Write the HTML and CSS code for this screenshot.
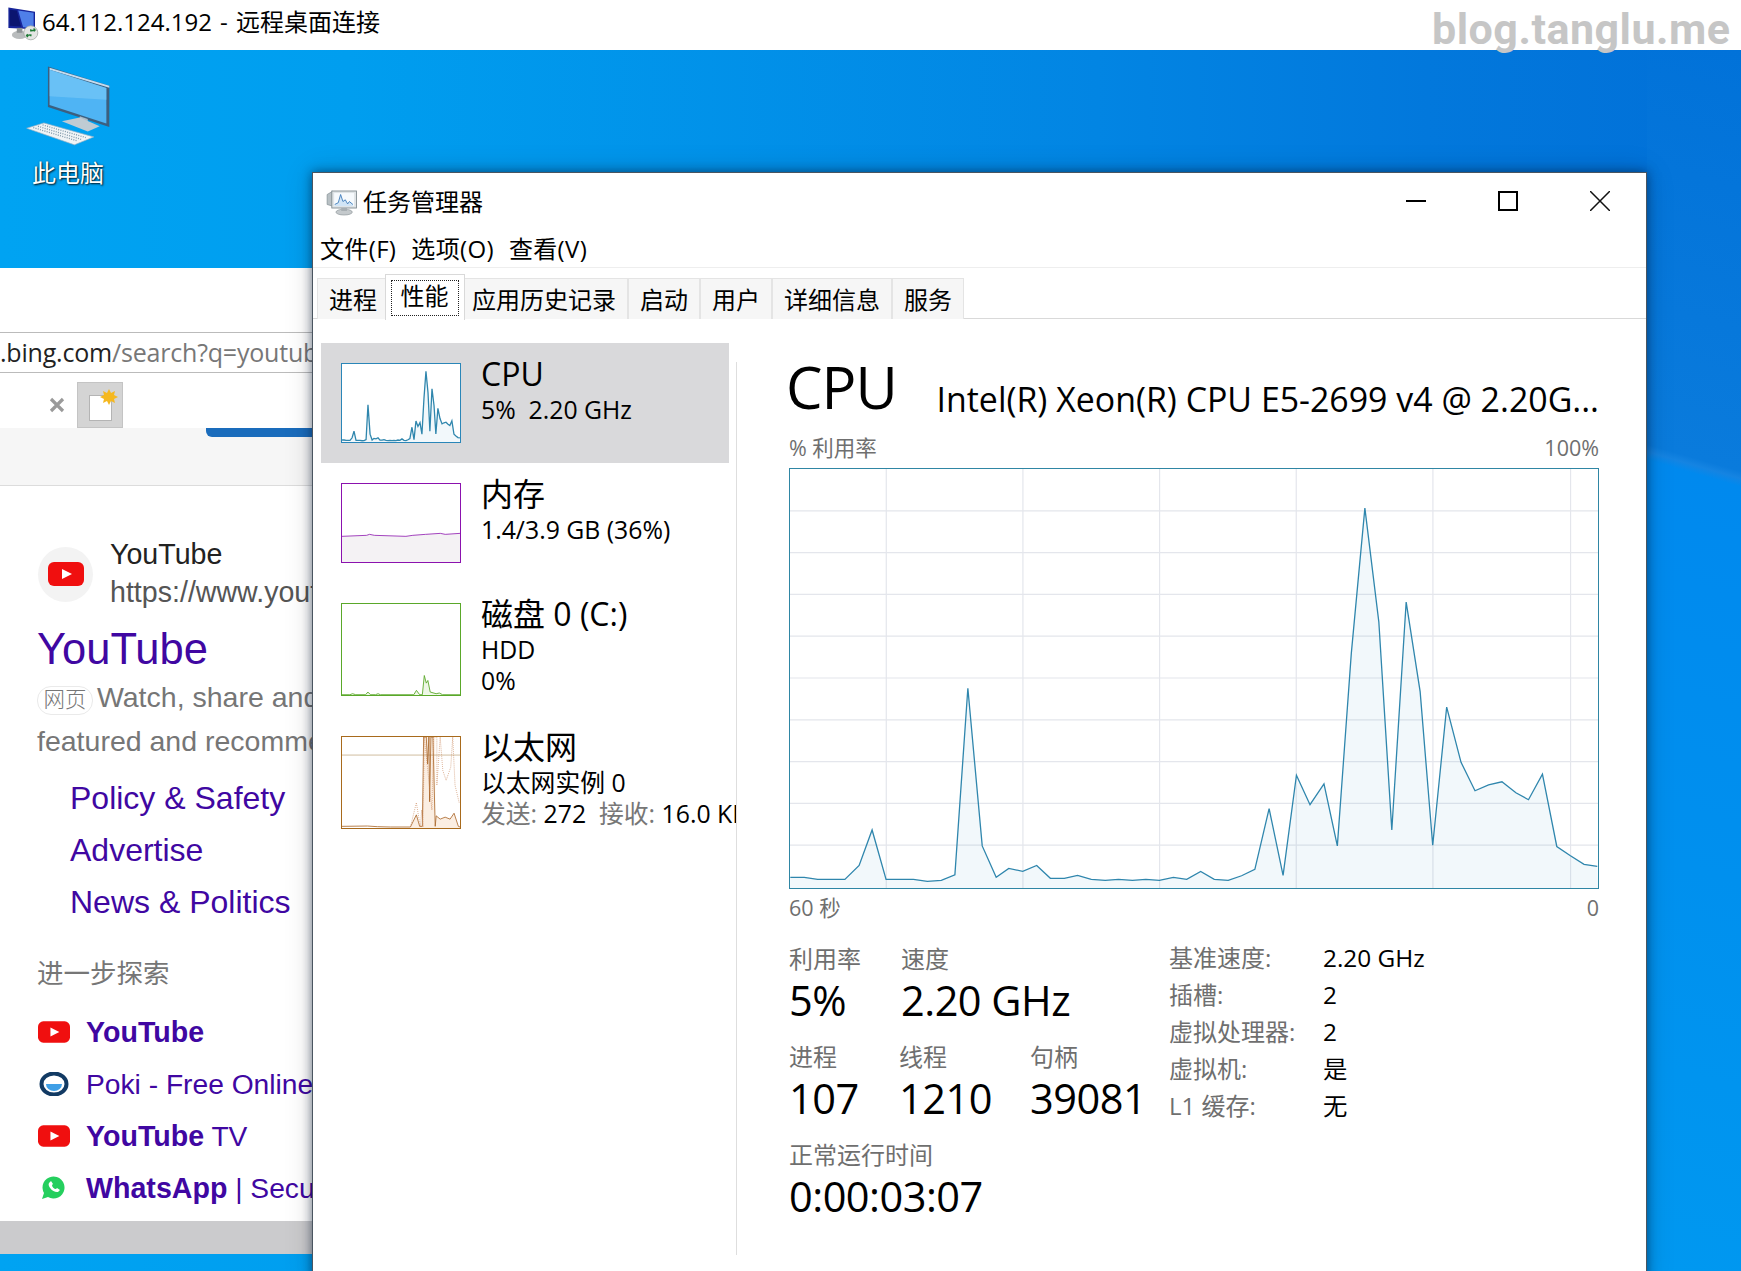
FILE: index.html
```html
<!DOCTYPE html>
<html lang="zh-CN">
<head>
<meta charset="utf-8">
<title>64.112.124.192 - 远程桌面连接</title>
<link rel="stylesheet" href="styles.css">
</head>
<body>
<svg class="defs" aria-hidden="true">
  <symbol id="cpu-data" viewBox="0 0 810 421" preserveAspectRatio="none">
    <polygon class="cpu-fill" points="0,421 0.3,410.3 14.3,410.3 27.7,412.3 55,412.3 69.3,398.3 82.3,362.7 96.3,412.3 123.7,412.3 137.7,414.3 151.7,413.3 165.3,407.7 178.3,220.3 192.7,378.7 206.7,410.3 219.3,401.3 233.3,404.3 247.3,398.3 261,411.3 275,411.3 288.3,408.3 302,412.3 316,413.3 329.3,412.3 343.3,413.3 356.7,412.3 370.3,413.3 384.3,410.3 397.7,412.3 411.7,404.3 425.3,412.3 439.3,413.3 452.7,408.7 466,402.3 480.3,341.3 494.3,408.3 507.7,307.7 521.3,337.3 535.3,316.3 548.7,378.7 562.7,185.3 576.3,39.3 590.3,153.7 603.3,362.7 617.7,133.7 631.7,223.7 644.3,378 658.3,239.3 672.7,294.7 686.7,323.3 700.3,317.3 713.7,314.3 727.7,325.3 740.3,332.3 754.3,306.7 768.7,379.3 782,388.3 796,397.3 809.3,399.3 810,421"/>
    <polyline class="cpu-line" points="0.3,410.3 14.3,410.3 27.7,412.3 55,412.3 69.3,398.3 82.3,362.7 96.3,412.3 123.7,412.3 137.7,414.3 151.7,413.3 165.3,407.7 178.3,220.3 192.7,378.7 206.7,410.3 219.3,401.3 233.3,404.3 247.3,398.3 261,411.3 275,411.3 288.3,408.3 302,412.3 316,413.3 329.3,412.3 343.3,413.3 356.7,412.3 370.3,413.3 384.3,410.3 397.7,412.3 411.7,404.3 425.3,412.3 439.3,413.3 452.7,408.7 466,402.3 480.3,341.3 494.3,408.3 507.7,307.7 521.3,337.3 535.3,316.3 548.7,378.7 562.7,185.3 576.3,39.3 590.3,153.7 603.3,362.7 617.7,133.7 631.7,223.7 644.3,378 658.3,239.3 672.7,294.7 686.7,323.3 700.3,317.3 713.7,314.3 727.7,325.3 740.3,332.3 754.3,306.7 768.7,379.3 782,388.3 796,397.3 809.3,399.3"/>
  </symbol>
  <symbol id="yt" viewBox="0 0 36 24">
    <rect width="36" height="24" rx="6" fill="#f00f0f"/>
    <polygon points="14,7 24,12 14,17" fill="#fff"/>
  </symbol>
</svg>

<header class="rdp-bar">
  <svg class="rdp-icon" viewBox="0 0 120 120">
    <polygon points="24,16 100,28 100,78 24,74" fill="#16249a"/>
    <polygon points="52,24 96,31 96,74 66,72" fill="#4f7fe8"/>
    <polygon points="28,22 48,24 60,70 28,68" fill="#0b1570"/>
    <ellipse cx="56" cy="94" rx="22" ry="12" fill="#b9bcbd"/>
    <rect x="48" y="74" width="16" height="14" fill="#8f9496"/>
    <circle cx="88" cy="88" r="20" fill="#e4e6e4" stroke="#9aa09c" stroke-width="2"/>
    <path d="M76 96l10-2M80 100l-4-4 3-4M100 80l-10 2M96 76l4 4-3 4M88 78v6M88 92v6" fill="none" stroke="#1d7a35" stroke-width="4"/>
  </svg>
  <span class="rdp-title">64.112.124.192 - 远程桌面连接</span>
  <span class="watermark">blog.tanglu.me</span>
</header>

<main class="desktop">
  <div class="desk-icon">
    <svg class="pc-icon" viewBox="70 190 265 255">
      <polygon points="142,200 327,258 327,382 142,322" fill="#3c5f7f"/>
      <polygon points="147,204 327,258 327,264 147,210" fill="#c4dcef"/>
      <polygon points="147,210 318,265 318,372 147,316" fill="#4fb4f4"/>
      <polygon points="147,210 318,265 318,300 147,290" fill="#7ccaf7" opacity=".6"/>
      <polygon points="238,350 262,358 262,378 238,370" fill="#a9bac6"/>
      <polygon points="184,365 238,354 298,380 262,396" fill="#bfcbd3"/>
      <polygon points="78,386 130,370 280,412 222,436" fill="#f0f4f6" stroke="#9db2c2" stroke-width="2"/>
      <path d="M98 384l132 40M112 380l132 40M126 376l130 38" stroke="#7f97a9" stroke-width="4" stroke-dasharray="3 4"/>
    </svg>
    <span class="desk-label">此电脑</span>
  </div>

  <section class="browser">
    <div class="br-top"></div>
    <div class="br-url"><b>.bing.com</b>/search?q=youtube</div>
    <div class="br-tabs">
      <div class="br-tab-rest">
        <svg class="br-x" viewBox="0 0 16 16"><path d="M2 2l12 12M14 2L2 14" stroke="#9a9a9a" stroke-width="3.2"/></svg>
      </div>
      <div class="br-new">
        <svg class="br-doc" viewBox="0 0 30 32">
          <rect x="1.5" y="6.5" width="22" height="25" fill="#fff" stroke="#b4b4b4"/>
          <path d="M21 0l2 4 4-2-1 4 4 2-4 2 1 4-4-2-2 4-2-4-4 2 1-4-4-2 4-2-1-4 4 2z" fill="#f5b81f"/>
        </svg>
      </div>
    </div>
    <div class="br-tool"><div class="br-progress"></div></div>
    <div class="results">
      <div class="site">
        <div class="favicon"><svg class="fav-yt"><use href="#yt"/></svg></div>
        <div class="site-text">
          <div class="site-name">YouTube</div>
          <div class="site-url">https://www.youtube.com</div>
        </div>
      </div>
      <a class="res-title">YouTube</a>
      <p class="res-desc"><span class="res-tag">网页</span> Watch, share and discover videos</p>
      <p class="res-desc">featured and recommended music</p>
      <a class="sublink first">Policy &amp; Safety</a>
      <a class="sublink">Advertise</a>
      <a class="sublink">News &amp; Politics</a>
      <h3 class="more">进一步探索</h3>
      <div class="rel first">
        <svg class="rel-icon"><use href="#yt"/></svg>
        <a><b>YouTube</b></a>
      </div>
      <div class="rel">
        <svg class="rel-icon" viewBox="0 0 32 24">
          <ellipse cx="16" cy="12" rx="12.5" ry="10.5" fill="#fff" stroke="#123a63" stroke-width="4"/>
          <path d="M8 12h16a8 7 0 0 1-16 0z" fill="#3f9fe6"/>
        </svg>
        <a>Poki - Free Online Games</a>
      </div>
      <div class="rel">
        <svg class="rel-icon"><use href="#yt"/></svg>
        <a><b>YouTube</b> TV</a>
      </div>
      <div class="rel">
        <svg class="rel-icon" viewBox="0 0 32 24">
          <path d="M4 23l2-6a11 11 0 1 1 4 4z" fill="#25cf5e"/>
          <path d="M11 7c-2 3 4 10 9 9l2-2-3-2-1 1c-2 0-4-2-4-4l1-1-2-3z" fill="#fff"/>
        </svg>
        <a><b>WhatsApp</b> | Secure messaging</a>
      </div>
    </div>
    <div class="br-status"></div>
  </section>

  <section class="tm">
    <div class="tm-title">
      <svg class="tm-icon" viewBox="0 0 150 135">
        <polygon points="14,42 34,30 34,82 14,76" fill="#b8c0c4" stroke="#78848a" stroke-width="2"/>
        <rect x="30" y="30" width="84" height="58" fill="#dfe4e7" stroke="#7f8b90" stroke-width="3"/>
        <rect x="38" y="37" width="68" height="44" fill="#f6fafd"/>
        <path d="M40 76l12-6 8-28 8 24 8-6 8 14 6-8 12 10V81H40z" fill="#c8e0f4" opacity=".8"/>
        <path d="M40 76l12-6 8-28 8 24 8-6 8 14 6-8 12 10" fill="none" stroke="#3a79b8" stroke-width="3"/>
        <ellipse cx="72" cy="102" rx="28" ry="10" fill="#c4c9cc" stroke="#888f93" stroke-width="2"/>
        <rect x="62" y="88" width="20" height="10" fill="#a7aeb2"/>
      </svg>
      <span class="tm-name">任务管理器</span>
      <div class="ctrls">
        <button class="ctrl"><svg viewBox="0 0 20 20"><path d="M0 10h20" stroke="#000" stroke-width="2"/></svg></button>
        <button class="ctrl"><svg viewBox="0 0 20 20"><rect x="1" y="1" width="18" height="18" fill="none" stroke="#000" stroke-width="2"/></svg></button>
        <button class="ctrl"><svg viewBox="0 0 20 20"><path d="M0 0l20 20M20 0L0 20" stroke="#111" stroke-width="1.5"/></svg></button>
      </div>
    </div>
    <nav class="tm-menu">
      <span>文件(F)</span><span>选项(O)</span><span>查看(V)</span>
    </nav>
    <div class="tm-tabs">
      <div class="tab">进程</div>
      <div class="tab active"><span class="focus">性能</span></div>
      <div class="tab">应用历史记录</div>
      <div class="tab">启动</div>
      <div class="tab">用户</div>
      <div class="tab">详细信息</div>
      <div class="tab">服务</div>
    </div>
    <div class="tm-body">
      <aside class="side">
        <div class="item selected">
          <div class="thumb thumb-cpu"><svg preserveAspectRatio="none" viewBox="0 0 810 421"><use href="#cpu-data" width="810" height="421"/></svg></div>
          <div class="item-text">
            <div class="item-title latin">CPU</div>
            <div class="item-sub">5%&nbsp; 2.20 GHz</div>
          </div>
        </div>
        <div class="item">
          <div class="thumb thumb-mem"><svg preserveAspectRatio="none" viewBox="0 0 120 79">
            <polygon points="0,79 0,53 25,52 28,51 33,52 65,53 72,52 85,51 100,50 105,51 120,50 120,79" fill="#f4f2f4"/>
            <polyline points="0,53 25,52 28,51 33,52 65,53 72,52 85,51 100,50 105,51 120,50" fill="none" stroke="#8b12ae" stroke-width=".8"/>
          </svg></div>
          <div class="item-text">
            <div class="item-title">内存</div>
            <div class="item-sub">1.4/3.9 GB (36%)</div>
          </div>
        </div>
        <div class="item tall">
          <div class="thumb thumb-disk"><svg preserveAspectRatio="none" viewBox="0 0 120 92">
            <polyline points="0,91.7 8,91.7 10.7,90.7 14,91.7 24,91.7 26.3,89 29,91.7 34,91.7 36.7,90.7 39,91.7 73,91.7 75.7,87.3 79,91.7 81.7,91.7 83.7,72.3 85.7,80 87.3,77.3 89.7,89 95.7,90.7 99,90 102.3,91.7 120,91.7" fill="#eef7e6" stroke="#5aa82a" stroke-width=".9"/>
          </svg></div>
          <div class="item-text">
            <div class="item-title">磁盘 0 (C:)</div>
            <div class="item-sub">HDD</div>
            <div class="item-sub third">0%</div>
          </div>
        </div>
        <div class="item tall">
          <div class="thumb thumb-eth"><svg preserveAspectRatio="none" viewBox="3 18 357 277">
            <polygon points="210,295 228,255 238,290 246,290 250,18 285,18 285,290 288,258 300,268 315,262 330,268 342,250 355,290 360,295" fill="#fbeee2"/>
            <path d="M3 73h357" stroke="#b89a6c" stroke-width="2" fill="none"/>
            <polyline points="3,290 80,289 110,291 150,292 210,292 228,255 238,290 246,290 250,18 258,18 262,100 266,18 268,215 272,18 278,18 285,290 288,258 300,268 315,262 330,268 342,250 355,290 360,292" fill="none" stroke="#a9672a" stroke-width="2.5"/>
            <polyline points="210,292 228,218 240,292 244,240 248,292 252,18 275,240 280,18 290,18 290,165 300,18 308,120 318,150 332,110 338,18 345,165 358,220" fill="none" stroke="#c9865a" stroke-width="2.2" stroke-dasharray="2.5 3.5"/>
          </svg></div>
          <div class="item-text">
            <div class="item-title">以太网</div>
            <div class="item-sub">以太网实例 0</div>
            <div class="item-sub third"><span class="dim">发送:</span> 272&nbsp; <span class="dim">接收:</span> 16.0 KB/s</div>
          </div>
        </div>
      </aside>
      <div class="vsep"></div>
      <div class="main">
        <div class="head">
          <h1 class="head-name">CPU</h1>
          <span class="head-model">Intel(R) Xeon(R) CPU E5-2699 v4 @ 2.20G...</span>
        </div>
        <div class="axis axis-top"><span>% 利用率</span><span>100%</span></div>
        <div class="graph">
          <svg viewBox="0 0 810 421" preserveAspectRatio="none">
            <path class="grid" d="M0 42h810M0 84h810M0 126h810M0 168h810M0 210h810M0 252h810M0 294h810M0 336h810M0 378h810M96.5 0v421M233.5 0v421M370.5 0v421M507.5 0v421M644.5 0v421M782.5 0v421"/>
            <use href="#cpu-data" width="810" height="421"/>
          </svg>
        </div>
        <div class="axis axis-bottom"><span>60 秒</span><span>0</span></div>
        <div class="stats">
          <div class="stats-left">
            <div class="stat-row">
              <div class="stat w-util"><div class="stat-label">利用率</div><div class="stat-value">5%</div></div>
              <div class="stat"><div class="stat-label">速度</div><div class="stat-value">2.20 GHz</div></div>
            </div>
            <div class="stat-row">
              <div class="stat w-proc"><div class="stat-label">进程</div><div class="stat-value">107</div></div>
              <div class="stat w-thread"><div class="stat-label">线程</div><div class="stat-value">1210</div></div>
              <div class="stat"><div class="stat-label">句柄</div><div class="stat-value">39081</div></div>
            </div>
            <div class="stat-row">
              <div class="stat"><div class="stat-label">正常运行时间</div><div class="stat-value">0:00:03:07</div></div>
            </div>
          </div>
          <dl class="specs">
            <dt>基准速度:</dt><dd>2.20 GHz</dd>
            <dt>插槽:</dt><dd>2</dd>
            <dt>虚拟处理器:</dt><dd>2</dd>
            <dt>虚拟机:</dt><dd>是</dd>
            <dt>L1 缓存:</dt><dd>无</dd>
          </dl>
        </div>
      </div>
    </div>
  </section>
</main>
</body>
</html>
```

FILE: styles.css
```css
* { box-sizing: border-box; }
html, body { margin: 0; padding: 0; }
body {
  width: 1741px;
  height: 1271px;
  overflow: hidden;
  display: flex;
  flex-direction: column;
  font-family: "Open Sans", "Noto Sans CJK SC", sans-serif;
  color: #000;
  background: #fff;
}
.defs { position: absolute; width: 0; height: 0; }
.cpu-fill { fill: rgba(17, 125, 187, .055); }
.cpu-line { fill: none; stroke: #2f86ad; stroke-width: 1.3; vector-effect: non-scaling-stroke; }

/* remote desktop bar */
.rdp-bar {
  height: 50px;
  flex: none;
  display: flex;
  align-items: center;
  background: #fff;
  position: relative;
  z-index: 2;
  padding-bottom: 10px;
}
.rdp-icon { width: 42px; height: 42px; flex: none; margin-top: 6px; }
.rdp-title { font-size: 24px; word-spacing: 2px; margin-left: 0; white-space: nowrap; }
.watermark {
  position: absolute;
  left: 1432px;
  top: 3px;
  font-family: Roboto, sans-serif;
  font-weight: 700;
  font-size: 43px;
  letter-spacing: .5px;
  line-height: 52px;
  color: #c6c6c6;
  white-space: nowrap;
}

/* desktop */
.desktop {
  flex: 1;
  position: relative;
  overflow: hidden;
  background:
    linear-gradient(196deg, #0172d9 0, #0a7bdc 405px, #1584e2 412px, #0089ee 420px, #0090ee 800px, #0098f0 100%) right top / 94px 100% no-repeat,
    linear-gradient(90deg, #00a3f2 0, #009eef 20%, #0285e3 63%, #0278dc 82%, #0170d8 100%);
}
.desk-icon {
  position: absolute;
  left: 26px;
  top: 13px;
  width: 84px;
  display: flex;
  flex-direction: column;
  align-items: center;
}
.pc-icon { width: 88px; height: 85px; flex: none; }
.desk-label {
  margin-top: 9px;
  font-size: 24px;
  line-height: 32px;
  color: #fff;
  white-space: nowrap;
  text-shadow: 1px 1px 2px rgba(0, 0, 0, .85), 0 0 2px rgba(0, 0, 0, .4);
}

/* browser behind */
.browser {
  position: absolute;
  left: 0;
  top: 218px;
  width: 313px;
  height: 986px;
  display: flex;
  flex-direction: column;
  overflow: hidden;
  background: #fff;
  font-family: "Liberation Sans", "Noto Sans CJK SC", sans-serif;
}
.br-top { height: 64px; flex: none; }
.br-url {
  height: 41px;
  flex: none;
  border-top: 1px solid #bbb;
  border-bottom: 1px solid #bbb;
  font-family: "Open Sans", sans-serif;
  font-size: 25px;
  line-height: 38px;
  letter-spacing: -.2px;
  color: #777;
  white-space: nowrap;
}
.br-url b { font-weight: 400; color: #222; }
.br-tabs { height: 55px; flex: none; display: flex; }
.br-tab-rest { width: 77px; display: flex; align-items: center; justify-content: flex-end; padding: 8px 12px 0 0; }
.br-x { width: 16px; height: 16px; }
.br-new {
  width: 46px;
  background: #d4d4d4;
  border: 1px solid #c4c4c4;
  margin-top: 9px;
  display: flex;
  align-items: center;
  justify-content: center;
}
.br-doc { width: 30px; height: 32px; margin-left: 5px; }
.br-tool { height: 58px; flex: none; background: #f6f6f6; border-bottom: 1px solid #dcdcdc; }
.br-progress { margin-left: 206px; height: 9px; background: #1a6cbc; border-bottom-left-radius: 6px; }
.results { flex: 1; padding: 49px 0 0 37px; white-space: nowrap; overflow: hidden; color: #4007a2; }
.site { display: flex; align-items: center; height: 76px; }
.favicon {
  width: 55px;
  height: 55px;
  flex: none;
  border-radius: 50%;
  background: #f3f3f3;
  display: flex;
  align-items: center;
  justify-content: center;
  margin: 2px 0 0 1px;
}
.fav-yt { width: 36px; height: 24px; }
.site-text { margin-left: 17px; margin-top: -1px; }
.site-name { font-size: 28.6px; line-height: 38px; color: #222; }
.site-url { font-size: 28.6px; line-height: 38px; color: #555; }
.res-title { display: block; margin-top: 13px; font-size: 43.5px; line-height: 51px; }
.res-desc { margin: 0; font-size: 28.5px; line-height: 44px; color: #767676; }
.res-tag {
  display: inline-block;
  width: 56px;
  height: 29px;
  line-height: 26px;
  border: 1px solid #eaeaea;
  border-radius: 14px;
  font-size: 21.5px;
  font-weight: 300;
  text-align: center;
  color: #777;
  margin-right: -4px;
}
.sublink { display: block; margin-left: 33px; font-size: 32px; line-height: 52px; }
.sublink.first { margin-top: 9px; }
.more { margin: 26px 0 0; font-size: 26.5px; line-height: 40px; font-weight: 400; color: #767676; }
.rel { display: flex; align-items: center; height: 52px; font-size: 28.2px; }
.rel b { font-size: 28.6px; }
.rel.first { margin-top: 12px; }
.rel-icon { width: 32px; height: 24px; flex: none; margin: 0 16px 0 1px; }
.br-status { height: 33px; flex: none; background: #cbcbcd; }

/* task manager */
.tm {
  position: absolute;
  left: 312px;
  top: 122px;
  width: 1335px;
  height: 1110px;
  background: #fff;
  border: 1px solid #4a5560;
  border-bottom: 0;
  box-shadow: 0 0 10px rgba(0, 20, 50, .55), 0 0 28px rgba(0, 0, 0, .14);
  display: flex;
  flex-direction: column;
}
.tm-title { height: 58px; flex: none; display: flex; align-items: center; padding-left: 10px; }
.tm-icon { width: 44px; height: 40px; flex: none; }
.tm-name { font-size: 24px; margin: -4px 0 0 -4px; }
.ctrls { margin-left: auto; display: flex; }
.ctrl { width: 92px; height: 40px; padding: 0; border: 0; background: none; display: flex; align-items: center; justify-content: center; margin-top: -2px; }
.ctrl svg { width: 20px; height: 20px; }
.tm-menu { height: 37px; flex: none; display: flex; gap: 15px; padding-left: 7px; font-size: 24px; line-height: 36px; letter-spacing: .35px; border-bottom: 1px solid #eee; }
.tm-tabs { height: 51px; flex: none; display: flex; align-items: flex-end; padding-left: 4px; border-bottom: 1px solid #d9d9d9; }
.tab {
  height: 41px;
  padding: 0 11px;
  background: #f6f6f6;
  border: 1px solid #e4e4e4;
  border-bottom: 0;
  font-size: 24px;
  line-height: 41px;
  margin-bottom: -1px;
  white-space: nowrap;
}
.tab.active {
  height: 46px;
  width: 80px;
  margin: 0 -4.5px -2px;
  padding: 5px;
  background: #fff;
  border-color: #d9d9d9;
  position: relative;
  z-index: 1;
  line-height: 30px;
}
.focus { display: block; height: 36px; border: 1px dotted #222; text-align: center; }
.tm-body { flex: 1; display: flex; align-items: flex-start; padding-top: 24px; min-height: 0; }
.side { width: 423px; flex: none; padding-left: 8px; overflow: hidden; }
.item { width: 408px; height: 120px; display: flex; padding: 20px 0 0 20px; }
.item.tall { height: 133px; }
.item.selected { background: #d9d9db; }
.thumb { width: 120px; flex: none; height: 80px; border: 1.5px solid; background: #fff; }
.tall .thumb { height: 93px; }
.thumb svg { display: block; width: 100%; height: 100%; }
.thumb-cpu { border-color: #2a86b8; }
.thumb-mem { border-color: #8b12ae; }
.thumb-disk { border-color: #5aa82a; }
.thumb-eth { border-color: #a86a1c; }
.item-text { margin-left: 20px; margin-top: -7px; white-space: nowrap; }
.item-title { font-size: 32px; line-height: 36px; }
.item-title.latin { margin-top: 0; }
.item-sub { font-size: 24.8px; line-height: 34px; }
.item-sub.third { line-height: 29px; }
.dim { color: #777; }
.vsep { width: 1px; flex: none; height: 893px; margin-top: 19px; background: #dedede; }
.main { width: 810px; flex: none; margin-left: 52px; }
.head { height: 91px; margin-top: -1px; display: flex; align-items: flex-start; justify-content: space-between; }
.head-name { margin: 0 0 0 -3px; font-size: 58px; font-weight: 400; line-height: 90px; letter-spacing: -1px; }
.head-model { margin-top: 34px; font-size: 33.9px; line-height: 46px; white-space: nowrap; }
.axis { display: flex; justify-content: space-between; font-size: 21.5px; line-height: 30px; color: #6f6f6f; }
.graph { height: 421px; margin-top: 5px; border: 1.5px solid #2f86a4; background: #fff; }
.graph svg { display: block; width: 100%; height: 100%; }
.grid { fill: none; stroke: #e4e6ec; stroke-width: 1.2; }
.axis-bottom { height: 30px; margin-top: 4px; }
.stats { display: flex; align-items: flex-start; margin-top: 21px; }
.stats-left { width: 380px; flex: none; display: flex; flex-direction: column; gap: 16px; }
.stat-row { display: flex; }
.stat-label { font-size: 24px; line-height: 30px; color: #6f6f6f; white-space: nowrap; }
.stat-value { font-size: 41.5px; line-height: 52px; letter-spacing: -.5px; white-space: nowrap; }
.w-util { width: 112px; }
.w-proc { width: 110px; }
.w-thread { width: 131px; }
.specs { margin: -5px 0 0; display: grid; grid-template-columns: 154px auto; grid-auto-rows: 37px; font-size: 24px; line-height: 37px; }
.specs dt { color: #6f6f6f; white-space: nowrap; }
.specs dd { margin: 0; font-size: 24.4px; white-space: nowrap; }
```
